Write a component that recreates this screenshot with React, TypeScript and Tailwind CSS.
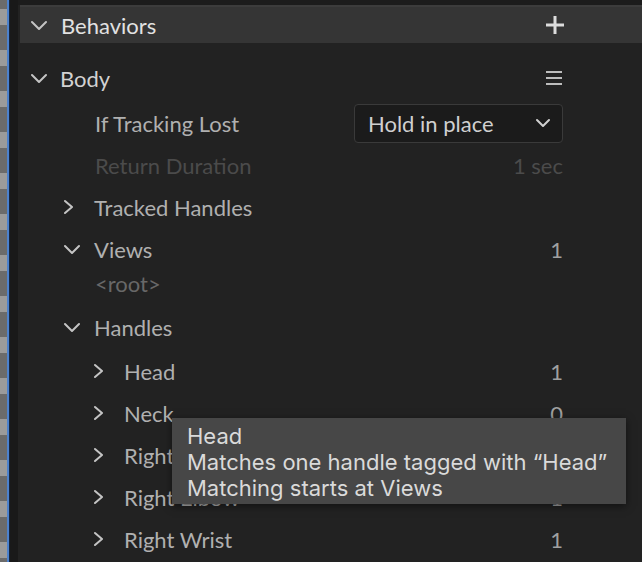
import { ReactNode } from "react";

const Chevron = ({ open }: { open: boolean }) => (
    <svg width="16" height="16" viewBox="0 0 16 16" className="shrink-0">
        {open ? (
            <polyline points="1,5 8,12 15,5" fill="none" stroke="#c4c4c4" strokeWidth="2" strokeLinecap="round" strokeLinejoin="round" />
        ) : (
            <polyline points="1,2 8,8 1,14" fill="none" stroke="#c4c4c4" strokeWidth="2" strokeLinecap="round" strokeLinejoin="round" />
        )}
    </svg>
);

type RowProps = {
    indent: number;
    chevron?: "open" | "closed";
    label: string;
    labelClass?: string;
    right?: ReactNode;
    h: string;
};

const Row = ({ indent, chevron, label, labelClass = "text-[#b0b0b0]", right, h }: RowProps) => (
    <div className={`flex items-center pr-[79px] ${h}`}>
        <div className="flex items-center" style={{ paddingLeft: indent }}>
            <div className="w-[30px] flex items-center">
                {chevron ? <Chevron open={chevron === "open"} /> : null}
            </div>
            <span className={labelClass}>{label}</span>
        </div>
        <div className="ml-auto">{right}</div>
    </div>
);

const App = () => {
    return (
        <div className="relative w-[642px] h-[562px] overflow-hidden flex bg-[#1b1b1b] font-['Lato',sans-serif] text-[22px]">
            {/* left edge strip */}
            <div className="w-[7px] h-full bg-[repeating-linear-gradient(180deg,#6b6b6b_0px,#6b6b6b_9px,#9b9b9b_9px,#9b9b9b_25px,#6b6b6b_25px,#6b6b6b_41px)]" />
            <div className="w-[2px] h-full bg-[#4d82cc]" />
            <div className="w-[1px] h-full bg-[#15233a]" />
            <div className="w-[8px] h-full bg-[#191919]" />

            <div className="flex-1 flex flex-col bg-[#222222]">
                <div className="h-[5px] bg-[#1c1c1c]" />
                <div className="ml-[2px] h-[38px] border-t-2 border-[#3c3c3c] bg-[#353535] flex items-center pl-[11px] pr-[77px]">
                    <div className="w-[30px] flex items-center">
                        <Chevron open />
                    </div>
                    <span className="text-[#e2e2e2]">Behaviors</span>
                    <svg width="20" height="20" viewBox="0 0 20 20" className="ml-auto">
                        <rect x="8.5" y="1" width="3" height="18" fill="#dcdcdc" />
                        <rect x="1" y="8.5" width="18" height="3" fill="#dcdcdc" />
                    </svg>
                </div>

                <div className="h-[11px]" />
                <div className="flex items-center h-[48px] pl-[13px] pr-[79px]">
                    <div className="w-[31px] flex items-center">
                        <Chevron open />
                    </div>
                    <span className="text-[#d2d2d2] -ml-[2px]">Body</span>
                    <svg width="18" height="14" viewBox="0 0 18 14" className="ml-auto">
                        <rect x="1" y="0" width="16" height="2" fill="#bdbdbd" />
                        <rect x="1" y="6" width="16" height="2" fill="#bdbdbd" />
                        <rect x="1" y="12" width="16" height="2" fill="#bdbdbd" />
                    </svg>
                </div>

                <div className="flex items-center h-[42px] pl-[77px] pr-[79px]">
                    <span className="text-[#b0b0b0]">If Tracking Lost</span>
                    <div className="ml-auto w-[209px] h-[39px] rounded-[4px] border border-[#3a3a3a] bg-[#1b1b1b] flex items-center pl-[13px] pr-[11px]">
                        <span className="text-[#d0d0d0]">Hold in place</span>
                        <svg width="16" height="16" viewBox="0 0 16 16" className="ml-auto">
                            <polyline points="2,5 8,11 14,5" fill="none" stroke="#d0d0d0" strokeWidth="2" strokeLinecap="round" strokeLinejoin="round" />
                        </svg>
                    </div>
                </div>

                <div className="flex items-center h-[42px] pl-[77px] pr-[79px]">
                    <span className="text-[#4b4b4b]">Return Duration</span>
                    <span className="ml-auto text-[#4b4b4b]">1 sec</span>
                </div>

                <Row h="h-[42px]" indent={46} chevron="closed" label="Tracked Handles" />
                <Row h="h-[42px]" indent={46} chevron="open" label="Views" right={<span className="text-[#a0a0a0]">1</span>} />
                <div className="flex items-center h-[26px] pl-[77px]">
                    <span className="text-[#686868]">&lt;root&gt;</span>
                </div>
                <Row h="h-[54px] pt-[8px]" indent={46} chevron="open" label="Handles" />
                {[
                    ["Head", "1"],
                    ["Neck", "0"],
                    ["Right Shoulder", "1"],
                    ["Right Elbow", "1"],
                    ["Right Wrist", "1"],
                ].map(([name, count]) => (
                    <Row
                        key={name}
                        h="h-[42px]"
                        indent={76}
                        chevron="closed"
                        label={name}
                        right={<span className="text-[#a0a0a0]">{count}</span>}
                    />
                ))}
            </div>

            {/* tooltip */}
            <div className="absolute left-[172px] top-[418px] w-[454px] h-[86px] bg-[#474747] shadow-[0_2px_8px_rgba(0,0,0,0.5)] pl-[15px] pt-[5px] font-['Inter',sans-serif] text-[22px] leading-[26px] text-[#dadada]">
                <div>Head</div>
                <div>Matches one handle tagged with “Head”</div>
                <div>Matching starts at Views</div>
            </div>
        </div>
    );
};

export default App;
